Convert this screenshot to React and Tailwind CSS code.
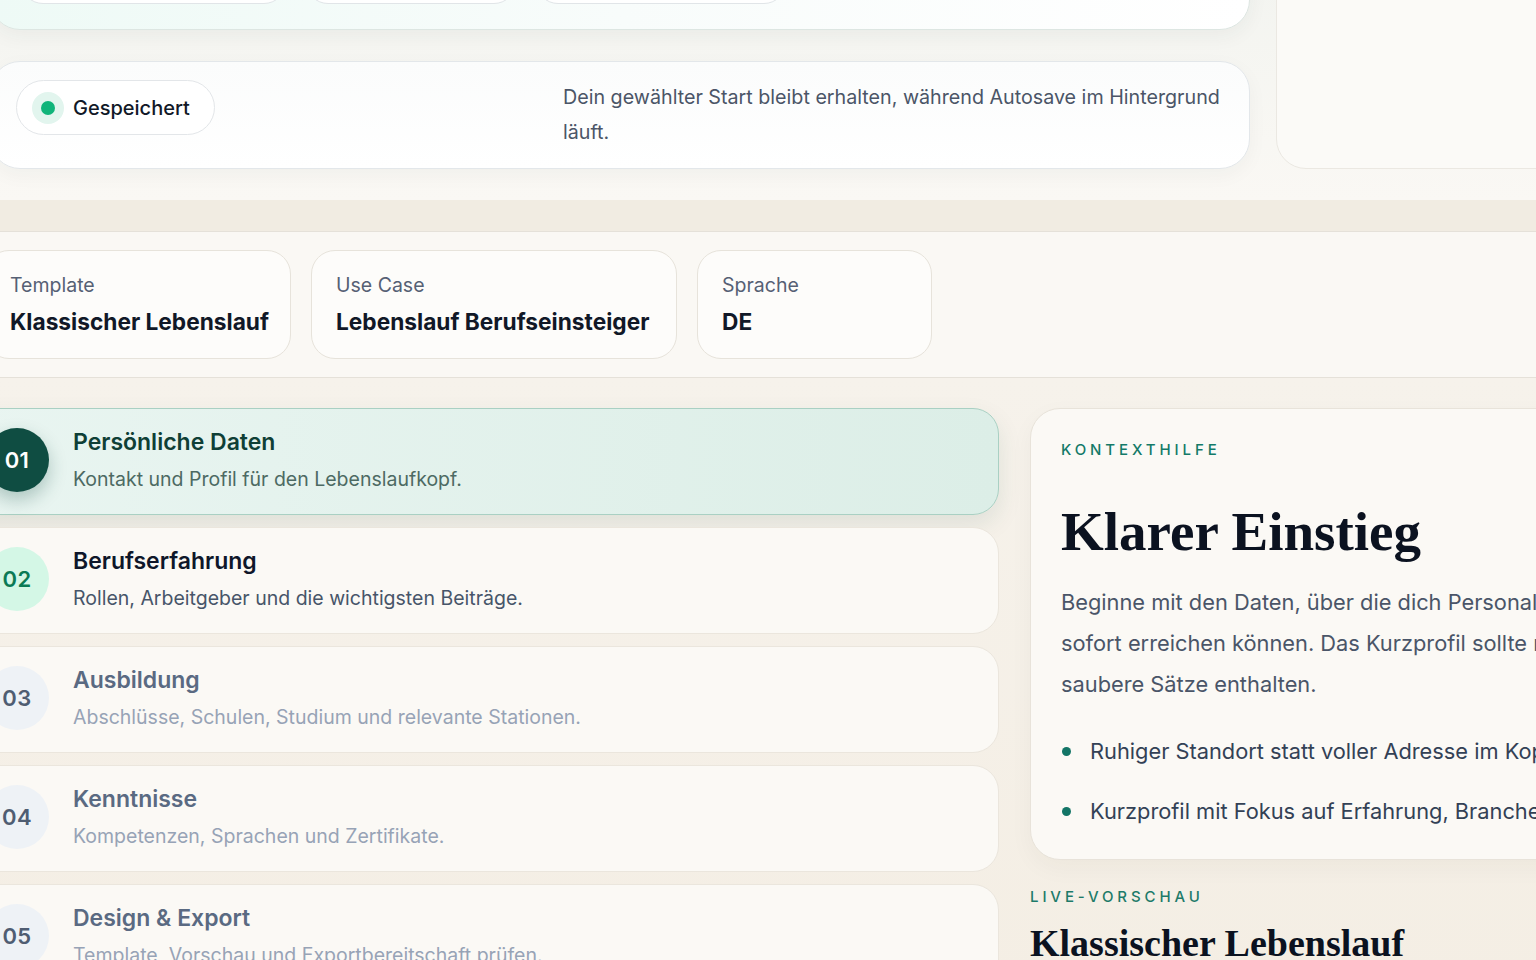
import React from 'react';

const sans = { fontFamily: 'Inter, "Noto Sans", sans-serif' };
const serif = { fontFamily: '"Liberation Serif", "DejaVu Serif", serif' };

const steps = [
  { no: '01', title: 'Persönliche Daten', desc: 'Kontakt und Profil für den Lebenslaufkopf.', state: 'active' },
  { no: '02', title: 'Berufserfahrung', desc: 'Rollen, Arbeitgeber und die wichtigsten Beiträge.', state: 'next' },
  { no: '03', title: 'Ausbildung', desc: 'Abschlüsse, Schulen, Studium und relevante Stationen.', state: 'idle' },
  { no: '04', title: 'Kenntnisse', desc: 'Kompetenzen, Sprachen und Zertifikate.', state: 'idle' },
  { no: '05', title: 'Design & Export', desc: 'Template, Vorschau und Exportbereitschaft prüfen.', state: 'idle' },
];

const meta = [
  { label: 'Template', value: 'Klassischer Lebenslauf', w: 'w-[306px]' },
  { label: 'Use Case', value: 'Lebenslauf Berufseinsteiger', w: 'w-[366px]' },
  { label: 'Sprache', value: 'DE', w: 'w-[235px]' },
];

const StepCard = ({ step }) => {
  const active = step.state === 'active';
  const next = step.state === 'next';

  const cardClass = active
    ? 'bg-linear-to-r from-[#e9f5f1] to-[#dceee7] border-[#a9d0c3] shadow-[0_10px_24px_rgba(15,77,66,0.10)]'
    : 'bg-[#fbf9f5] border-[#ebe6dd]';

  const circleClass = active
    ? 'bg-[#0f4d42] text-white shadow-[0_8px_18px_rgba(15,77,66,0.28)]'
    : next
    ? 'bg-[#d4f7e6] text-[#0b7a55]'
    : 'bg-[#eef2f6] text-[#4f5d72]';

  const titleClass = active ? 'text-[#0f3f36]' : next ? 'text-[#0f172a]' : 'text-[#5a6a82]';
  const descClass = active ? 'text-[#4d6a63]' : next ? 'text-[#475569]' : 'text-[#97a3b6]';

  return (
    <div className={`flex items-center gap-6 rounded-[26px] border pl-6 pt-[17px] pb-[20px] ${cardClass}`}>
      <div className={`flex h-16 w-16 shrink-0 items-center justify-center rounded-full text-[22px] font-semibold tracking-[0.02em] ${circleClass}`}>
        {step.no}
      </div>
      <div>
        <div className={`text-[23px] leading-[32px] font-semibold ${titleClass}`}>{step.title}</div>
        <div className={`mt-[6px] text-[19.5px] leading-[30px] ${descClass}`}>{step.desc}</div>
      </div>
    </div>
  );
};

export default function App() {
  return (
    <div className="h-[960px] w-[1536px] overflow-hidden bg-[#f5f0e8]" style={sans}>
      {/* Kopfbereich */}
      <div className="-mt-[80px] flex gap-[26px] bg-linear-to-b from-[#f1f3ef] to-[#faf8f4] pb-[31px]">
        <div className="-ml-[10px] flex w-[1260px] shrink-0 flex-col gap-[31px]">
          <div className="flex h-[110px] items-end gap-5 rounded-[30px] border border-[#dde6e2] bg-linear-to-r from-[#eefaf6] via-[#f8fcfb] to-white px-[30px] pb-[25px] shadow-[0_6px_20px_rgba(30,60,50,0.05)]">
            <div className="h-[50px] w-[265px] rounded-[22px] border border-[#e1e5e8] bg-white" />
            <div className="h-[50px] w-[210px] rounded-[22px] border border-[#e1e5e8] bg-white" />
            <div className="h-[50px] w-[250px] rounded-[22px] border border-[#e1e5e8] bg-white" />
          </div>
          <div className="flex items-start justify-between rounded-[30px] border border-[#e3e7ea] bg-linear-to-b from-[#fbfcfc] to-white pl-[25px] pr-[26px] pt-[18px] pb-[18px] shadow-[0_6px_20px_rgba(30,40,50,0.04)]">
            <div className="flex h-[55px] items-center gap-[9px] rounded-full border border-[#e3e6e9] bg-white pl-[15px] pr-[24px]">
              <span className="flex h-8 w-8 items-center justify-center rounded-full bg-[#e2f5ee]">
                <span className="h-[14px] w-[14px] rounded-full bg-[#10b47a]" />
              </span>
              <span className="text-[20px] font-medium text-[#111827]">Gespeichert</span>
            </div>
            <p className="mr-[4px] w-[656px] text-[19.7px] leading-[35px] whitespace-nowrap text-[#4b5567]">
              Dein gewählter Start bleibt erhalten, während Autosave im Hintergrund
              <br />
              läuft.
            </p>
          </div>
        </div>
        <div className="w-[400px] shrink-0 rounded-[30px] border border-[#ebe8e2] bg-[#fbfaf7]" />
      </div>

      <div className="h-[31px] bg-[#f1ece2]" />

      {/* Auswahl */}
      <div className="border-y border-[#e5e1d9] bg-[#faf8f4] pt-[18px] pb-[18px]">
        <div className="-ml-[15px] flex gap-5">
          {meta.map((m) => (
            <div key={m.label} className={`${m.w} shrink-0 rounded-[24px] border border-[#e7e3db] bg-[#fdfcfa] px-6 pt-[20px] pb-[21px]`}>
              <div className="text-[19.5px] leading-[28px] text-[#566074]">{m.label}</div>
              <div className="mt-2 text-[22.7px] leading-[30px] font-bold whitespace-nowrap text-[#111827]">{m.value}</div>
            </div>
          ))}
        </div>
      </div>

      {/* Schritte + Kontext */}
      <div className="flex gap-[31px] bg-linear-to-b from-[#f6f2eb] to-[#f4eee4] pt-[30px]">
        <div className="-ml-[40px] flex w-[1039px] shrink-0 flex-col gap-3">
          {steps.map((s) => (
            <StepCard key={s.no} step={s} />
          ))}
        </div>

        <div className="w-[640px] shrink-0">
          <div className="rounded-[30px] border border-[#e8e3da] bg-[#fbf9f5] pl-[30px] pt-[31px] pb-[30px] shadow-[0_8px_24px_rgba(60,50,30,0.04)]">
            <div className="text-[15px] leading-[20px] font-medium tracking-[0.26em] text-[#137a68]">KONTEXTHILFE</div>
            <h2 className="mt-[42px] text-[55px] leading-[60px] font-bold text-[#0b1220]" style={serif}>
              Klarer Einstieg
            </h2>
            <p className="mt-[20px] text-[21.8px] leading-[41px] whitespace-nowrap text-[#4a5568]">
              Beginne mit den Daten, über die dich Personaler
              <br />
              sofort erreichen können. Das Kurzprofil sollte nur wenige,
              <br />
              saubere Sätze enthalten.
            </p>
            <ul className="mt-[28px] flex flex-col gap-6">
              <li className="flex items-center gap-[19px] text-[21.8px] leading-[36px] whitespace-nowrap text-[#334155]">
                <span className="ml-[1px] h-[9px] w-[9px] shrink-0 rounded-full bg-[#137566]" />
                Ruhiger Standort statt voller Adresse im Kopfbereich.
              </li>
              <li className="flex items-center gap-[19px] text-[21.8px] leading-[36px] whitespace-nowrap text-[#334155]">
                <span className="ml-[1px] h-[9px] w-[9px] shrink-0 rounded-full bg-[#137566]" />
                Kurzprofil mit Fokus auf Erfahrung, Branche und Ziel.
              </li>
            </ul>
          </div>
          <div className="mt-[27px] text-[15px] leading-[20px] font-medium tracking-[0.26em] text-[#1d7a69]">LIVE-VORSCHAU</div>
          <h3 className="mt-[14px] text-[38px] leading-[44px] font-bold whitespace-nowrap text-[#0b1220]" style={serif}>
            Klassischer Lebenslauf
          </h3>
        </div>
      </div>
    </div>
  );
}
